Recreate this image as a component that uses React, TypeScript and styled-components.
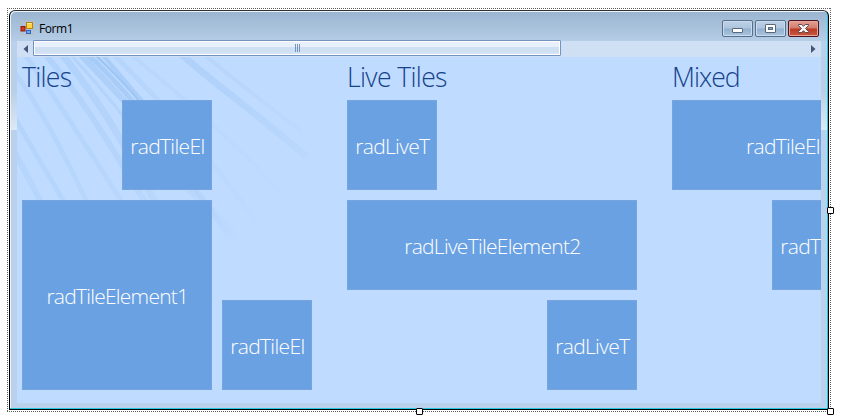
import React from "react";
import styled, { createGlobalStyle } from "styled-components";

const GlobalStyle = createGlobalStyle`
  body { margin: 0; background: #fff; }
  * { box-sizing: border-box; }
`;

const dots = "#5c5c5c 0 1px, transparent 1px 2px";

const Stage = styled.div`
  height: 420px;
  padding: 8px 0 0 7px;
  overflow: hidden;
`;

const Selection = styled.div`
  position: relative;
  width: 824px;
  height: 404px;
  padding: 2px;
  background:
    repeating-linear-gradient(90deg, ${dots}) 0 0 / 100% 1px no-repeat,
    repeating-linear-gradient(90deg, ${dots}) 0 100% / 100% 1px no-repeat,
    repeating-linear-gradient(180deg, ${dots}) 0 0 / 1px 100% no-repeat,
    repeating-linear-gradient(180deg, ${dots}) 100% 0 / 1px 100% no-repeat;
`;

const Handle = styled.i<{ $x: number; $y: number }>`
  position: absolute;
  left: ${(p) => p.$x}px;
  top: ${(p) => p.$y}px;
  width: 7px;
  height: 7px;
  border: 1px solid #000;
  border-radius: 1px;
  background: #fff;
`;

const Frame = styled.div`
  display: flex;
  flex-direction: column;
  height: 400px;
  border: 1px solid #000;
  border-top-color: #333;
  border-radius: 6px 6px 0 0;
  padding: 0 7px 6px;
  box-shadow: inset -1px -1px 0 #27c8e0, inset 1px 1px 0 #e9f2fa;
  background:
    linear-gradient(#9ab5d1, #b5cde5 30px, #b9d1ea) 0 0 / 100% 30px no-repeat,
    linear-gradient(#b9d1ea, #b9cfe6 50px, #dce8f5) 0 30px / 7px 89px no-repeat,
    linear-gradient(#b9d1ea, #b9cfe6 50px, #dce8f5) 100% 30px / 7px 89px no-repeat,
    #b9d1ea;
`;

const TitleBar = styled.header`
  display: flex;
  align-items: flex-start;
  flex: 0 0 30px;
  padding: 9px 2px 0 3px;
  font: 12px/18px "Open Sans", sans-serif;
  color: #000;
`;

const AppIcon = styled.svg`
  margin-top: 1px;
`;

const Title = styled.span`
  flex: 1;
  margin-left: 5px;
  letter-spacing: -0.45px;
`;

const Buttons = styled.div`
  display: flex;
  gap: 2px;
`;

const CaptionButton = styled.button<{ $close?: boolean }>`
  display: flex;
  align-items: center;
  justify-content: center;
  width: 31px;
  height: 17px;
  padding: 0;
  border: 1px solid ${(p) => (p.$close ? "#4d1420" : "#596f89")};
  border-radius: 2px;
  box-shadow: inset 0 0 0 1px ${(p) => (p.$close ? "#e6a59b" : "#c9dcef")};
  background: ${(p) =>
    p.$close
      ? "linear-gradient(#e4a195, #d27b6b 48%, #b93a23 52%, #c95740)"
      : "linear-gradient(#bdd1e6, #aec5de 48%, #92b0cf 52%, #a9c5df)"};
`;

const ScrollBar = styled.div`
  display: flex;
  flex: 0 0 17px;
  margin-top: -1px;
  background: linear-gradient(transparent 1px, #cfdff4 1px);
`;

const Arrow = styled.span<{ $right?: boolean }>`
  display: flex;
  align-items: center;
  justify-content: center;
  width: 16px;
  margin-left: ${(p) => (p.$right ? "auto" : 0)};
`;

const Thumb = styled.div`
  display: flex;
  align-items: center;
  justify-content: center;
  gap: 1px;
  width: 528px;
  height: 16px;
  border: 1px solid #7493bf;
  border-radius: 1px;
  box-shadow: inset 0 0 0 1px #fff;
  background: linear-gradient(#e7f0fb 0 6px, #d0e0f3 6px 11px, #dce8f7 14px);
`;

const Grip = styled.i`
  width: 1px;
  height: 8px;
  background: #7794bc;
`;

const Panorama = styled.main`
  position: relative;
  flex: 1;
  display: flex;
  gap: 35px;
  padding-left: 5px;
  overflow: hidden;
  background: #bfdbff;
`;

const Rays = styled.svg`
  position: absolute;
  inset: 0;
`;

const Group = styled.section`
  position: relative;
  flex: 0 0 290px;
`;

const Heading = styled.h2<{ $spacing: number }>`
  margin: 0;
  height: 43px;
  font: 300 26.6px/41px "Open Sans", sans-serif;
  letter-spacing: ${(p) => p.$spacing}px;
  color: #15428b;
  white-space: nowrap;
`;

const TileGrid = styled.div`
  display: grid;
  grid-template-columns: repeat(3, 90px);
  grid-template-rows: repeat(3, 90px);
  gap: 10px;
`;

const TileBox = styled.div<{ $area: string }>`
  grid-area: ${(p) => p.$area};
  display: flex;
  align-items: center;
  justify-content: center;
  border: 1px solid #75a4df;
  background: #6aa1e3;
  color: #fff;
  font: 300 21px/28px "Open Sans", sans-serif;
  white-space: nowrap;
  overflow: hidden;
`;

const Label = styled.span<{ $spacing: number }>`
  letter-spacing: ${(p) => p.$spacing}px;
  margin-right: ${(p) => p.$spacing}px;
  padding-top: 1px;
`;

type TileData = { text: string; area: string; spacing: number };
type GroupData = { title: string; spacing: number; tiles: TileData[] };

const groups: GroupData[] = [
  {
    title: "Tiles",
    spacing: -0.7,
    tiles: [
      { text: "radTileEl", area: "1 / 2 / 2 / 3", spacing: -0.65 },
      { text: "radTileElement1", area: "2 / 1 / 4 / 3", spacing: -0.75 },
      { text: "radTileEl", area: "3 / 3 / 4 / 4", spacing: -0.65 },
    ],
  },
  {
    title: "Live Tiles",
    spacing: -0.65,
    tiles: [
      { text: "radLiveT", area: "1 / 1 / 2 / 2", spacing: -0.65 },
      { text: "radLiveTileElement2", area: "2 / 1 / 3 / 4", spacing: -0.72 },
      { text: "radLiveT", area: "3 / 3 / 4 / 4", spacing: -0.65 },
    ],
  },
  {
    title: "Mixed",
    spacing: -1,
    tiles: [
      { text: "radTileElement3", area: "1 / 1 / 2 / 4", spacing: -0.7 },
      { text: "radTileEl", area: "2 / 2 / 3 / 3", spacing: -0.65 },
    ],
  },
];

const rays: [string, number, number][] = [
  ["M62 -4 C90 25 150 85 215 185", 6, 0.5],
  ["M69 -4 C96 20 131 60 168 112", 5, 0.65],
  ["M76 -4 C103 20 138 60 180 118", 2.5, 0.9],
  ["M84 -4 L152 75", 4, 0.6],
  ["M95 -4 C125 26 185 85 248 178", 5, 0.25],
  ["M44 -4 C80 40 110 90 138 145", 7, 0.35],
  ["M52 -4 C84 30 110 62 136 100", 3, 0.35],
  ["M27 -4 C57 30 85 74 128 145", 6, 0.35],
  ["M7 -4 C45 50 75 98 105 145", 5, 0.26],
  ["M-5 12 C20 45 45 92 70 145", 5, 0.26],
  ["M-4 58 L47 145", 5, 0.3],
  ["M-4 92 L24 145", 6, 0.26],
  ["M112 -4 C165 39 220 87 268 140", 4, 0.16],
  ["M163 -4 C195 25 235 53 290 100", 7, 0.45],
  ["M185 -4 C220 25 250 48 285 75", 4, 0.22],
  ["M168 128 C190 148 215 175 240 205", 8, 0.4],
];

export default function App() {
  return (
    <Stage>
      <GlobalStyle />
      <Selection>
        <Frame>
          <TitleBar>
            <AppIcon width="14" height="14" viewBox="0 0 14 14">
              <path d="M.5 .5h13v13H.5z" fill="none" stroke="#b9bec4" strokeWidth="1" />
              <rect x="1" y="5.5" width="4" height="4.5" fill="#d4391f" stroke="#8f1b10" />
              <rect x="6.5" y="1.5" width="6" height="6" fill="#ffd341" stroke="#b88410" />
              <path d="M7.5 2.5h4" stroke="#fff0a0" />
              <rect x="6.5" y="9.5" width="4" height="3" fill="#6ea3ef" stroke="#3265bd" />
            </AppIcon>
            <Title>Form1</Title>
            <Buttons>
              <CaptionButton aria-label="Minimize">
                <svg width="11" height="13" viewBox="0 0 11 13">
                  <rect x=".5" y="6.5" width="10" height="4" rx=".5" fill="#fff" stroke="#596779" />
                </svg>
              </CaptionButton>
              <CaptionButton aria-label="Maximize">
                <svg width="11" height="9" viewBox="0 0 11 9">
                  <rect x=".5" y=".5" width="10" height="8" rx=".5" fill="#fff" stroke="#596779" />
                  <rect x="3.5" y="3.5" width="4" height="2" fill="#8ca9c8" stroke="#596779" />
                </svg>
              </CaptionButton>
              <CaptionButton $close aria-label="Close">
                <svg width="11" height="9" viewBox="0 0 11 9">
                  <path
                    d="M.5.5h3.2l1.8 1.8L7.3.5h3.2v1L7.6 4.5l2.9 3v1H7.3L5.5 6.7 3.7 8.5H.5v-1l2.9-3L.5 1.5z"
                    fill="#f5f5f5"
                    stroke="#5b4650"
                  />
                </svg>
              </CaptionButton>
            </Buttons>
          </TitleBar>
          <ScrollBar>
            <Arrow>
              <svg width="5" height="8"><path d="M5 0v8L.5 4z" fill="#44557a" /></svg>
            </Arrow>
            <Thumb><Grip /><Grip /><Grip /></Thumb>
            <Arrow $right>
              <svg width="5" height="8"><path d="M0 0v8L4.500 4z" fill="#44557a" /></svg>
            </Arrow>
          </ScrollBar>
          <Panorama>
            <Rays width="330" height="240">
              <defs>
                <linearGradient id="fade" gradientUnits="userSpaceOnUse" x1="60" y1="0" x2="190" y2="210">
                  <stop offset="0" stopColor="#98c2f2" />
                  <stop offset=".45" stopColor="#98c2f2" stopOpacity=".75" />
                  <stop offset="1" stopColor="#98c2f2" stopOpacity="0" />
                </linearGradient>
              </defs>
              {rays.map(([d, width, opacity]) => (
                <path key={d} d={d} fill="none" stroke="url(#fade)" strokeWidth={width} opacity={opacity} />
              ))}
            </Rays>
            {groups.map((group) => (
              <Group key={group.title}>
                <Heading $spacing={group.spacing}>{group.title}</Heading>
                <TileGrid>
                  {group.tiles.map((tile) => (
                    <TileBox key={tile.area} $area={tile.area}>
                      <Label $spacing={tile.spacing}>{tile.text}</Label>
                    </TileBox>
                  ))}
                </TileGrid>
              </Group>
            ))}
          </Panorama>
        </Frame>
        <Handle $x={820} $y={199} />
        <Handle $x={409} $y={400} />
        <Handle $x={820} $y={400} />
      </Selection>
    </Stage>
  );
}
